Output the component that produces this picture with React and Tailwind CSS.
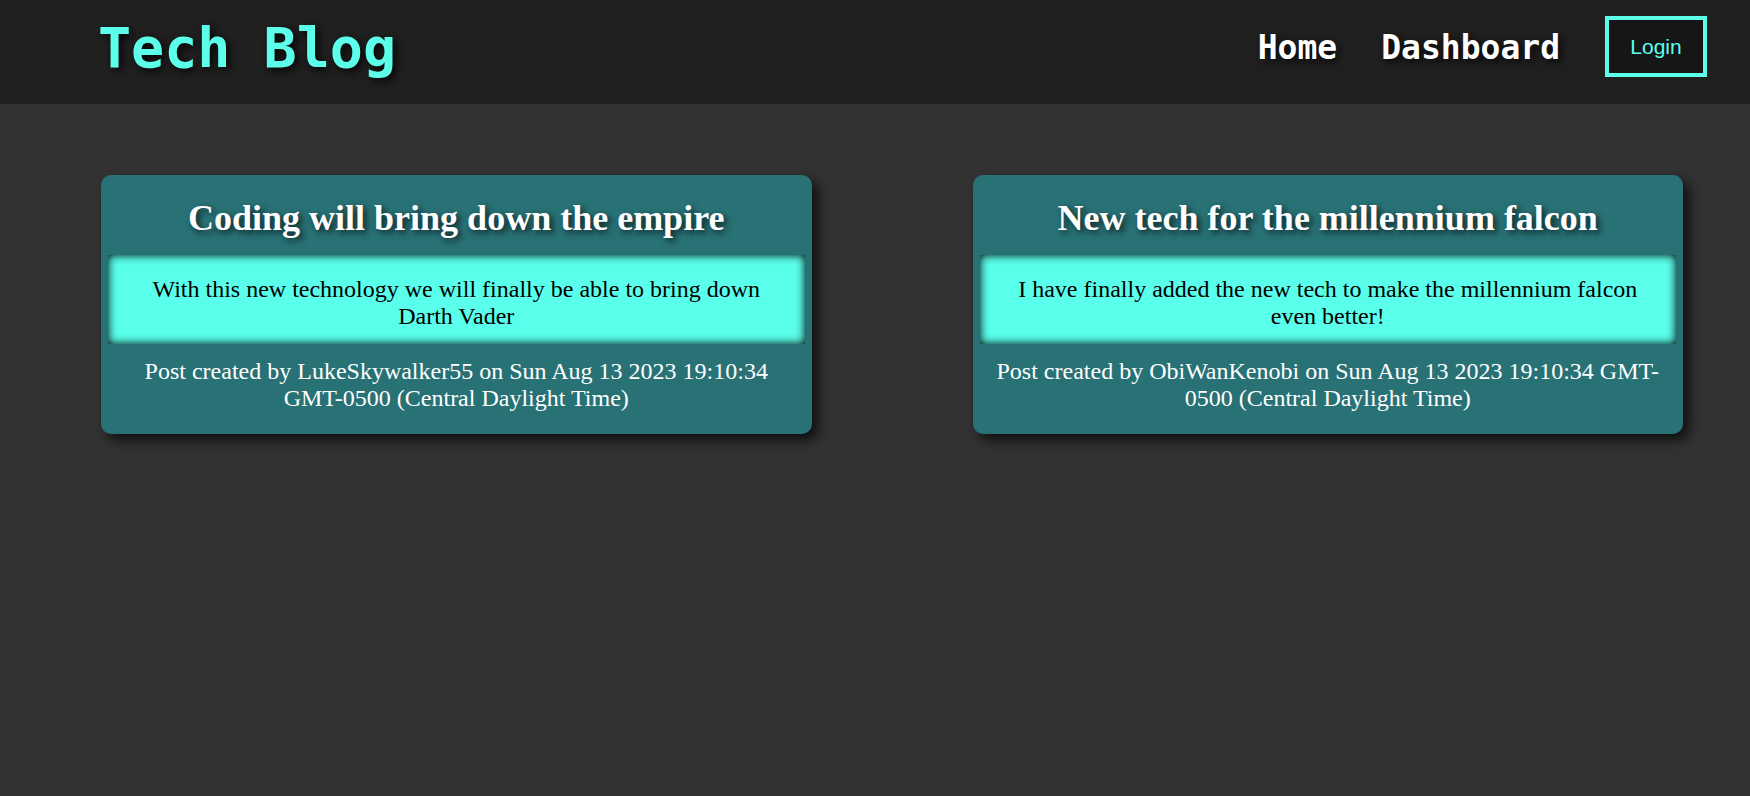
export default function App() {
  const posts = [
    {
      title: "Coding will bring down the empire",
      body: "With this new technology we will finally be able to bring down Darth Vader",
      author: "LukeSkywalker55",
      date: "Sun Aug 13 2023 19:10:34 GMT-0500 (Central Daylight Time)",
    },
    {
      title: "New tech for the millennium falcon",
      body: "I have finally added the new tech to make the millennium falcon even better!",
      author: "ObiWanKenobi",
      date: "Sun Aug 13 2023 19:10:34 GMT-0500 (Central Daylight Time)",
    },
  ];

  return (
    <div className="min-h-screen bg-[#323232]">
      <header className="flex h-[104px] items-start justify-between bg-[#202020] pl-[98px] pr-[43px]">
        <h1 className="mt-[16px] font-['DejaVu_Sans_Mono',monospace] text-[55px] font-bold leading-[normal] text-[#5cffea] [text-shadow:3px_3px_8px_rgba(0,0,0,0.9)]">
          Tech Blog
        </h1>
        <nav className="flex items-start">
          <a className="mt-[28px] font-['DejaVu_Sans_Mono',monospace] text-[33px] font-bold leading-[normal] text-white [text-shadow:3px_3px_8px_rgba(0,0,0,0.9)]">
            Home
          </a>
          <a className="ml-[44px] mt-[28px] font-['DejaVu_Sans_Mono',monospace] text-[33px] font-bold leading-[normal] text-white [text-shadow:3px_3px_8px_rgba(0,0,0,0.9)]">
            Dashboard
          </a>
          <button className="ml-[45px] mt-[16px] flex h-[61px] w-[102px] items-center justify-center border-4 border-[#5cffea] bg-[#161616] font-['Liberation_Sans',sans-serif] text-[21px] leading-[normal] text-[#5cffea]">
            Login
          </button>
        </nav>
      </header>

      <main className="grid grid-cols-2 gap-[161px] pl-[101px] pr-[67px] pt-[71px]">
        {posts.map((post) => (
          <article
            key={post.title}
            className="rounded-[10px] bg-[#287175] px-[7px] pb-[22px] pt-[22px] text-center font-['Liberation_Serif',serif] shadow-[6px_6px_12px_rgba(0,0,0,0.7)]"
          >
            <h2 className="mb-[16px] text-[36px] font-bold leading-[normal] text-white [text-shadow:3px_3px_6px_rgba(0,0,0,0.7)]">
              {post.title}
            </h2>
            <div className="bg-[#5affeb] px-[20px] pb-[14px] pt-[21px] shadow-[inset_0_0_10px_#000]">
              <p className="text-[24px] leading-[normal] text-black">{post.body}</p>
            </div>
            <p className="mt-[14px] px-[12px] text-[24px] leading-[normal] text-white">
              Post created by {post.author} on {post.date}
            </p>
          </article>
        ))}
      </main>
    </div>
  );
}
